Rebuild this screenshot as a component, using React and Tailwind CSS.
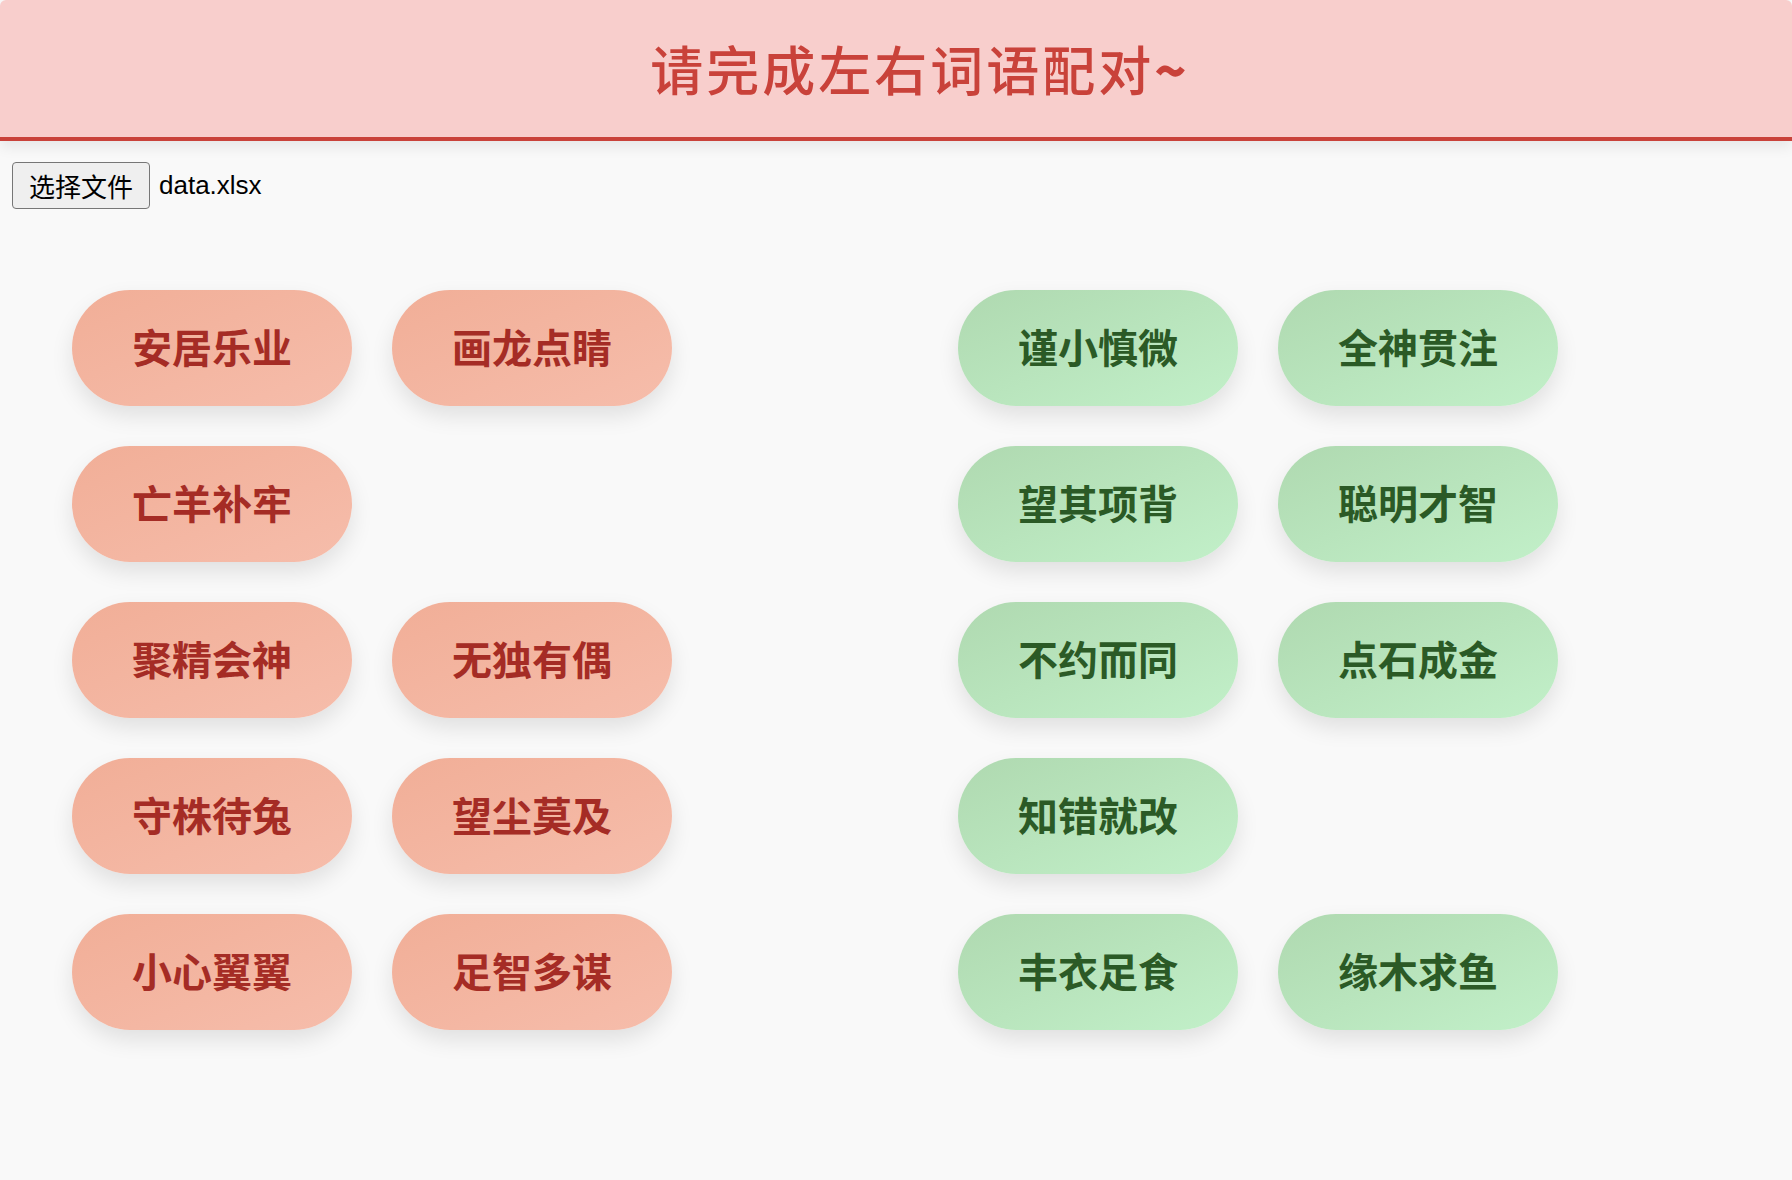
const LEFT = [
  ["安居乐业", "画龙点睛"],
  ["亡羊补牢", null],
  ["聚精会神", "无独有偶"],
  ["守株待兔", "望尘莫及"],
  ["小心翼翼", "足智多谋"],
];

const RIGHT = [
  ["谨小慎微", "全神贯注"],
  ["望其项背", "聪明才智"],
  ["不约而同", "点石成金"],
  ["知错就改", null],
  ["丰衣足食", "缘木求鱼"],
];

const FONT = { fontFamily: '"Noto Sans CJK SC", "Noto Sans", sans-serif' };

function Pill({ word, side }) {
  if (!word) return <div className="h-[116px] w-[280px]" />;
  const tone =
    side === "left"
      ? "bg-gradient-to-br from-[#f1ae97] to-[#f6bdab] text-[#a52c25]"
      : "bg-gradient-to-br from-[#afd9b0] to-[#c2f0c9] text-[#2b5a26]";
  return (
    <button
      type="button"
      className={`flex h-[116px] w-[280px] items-center justify-center rounded-full pb-[5px] text-[40px] font-bold shadow-[0_10px_22px_rgba(0,0,0,0.1)] ${tone}`}
    >
      {word}
    </button>
  );
}

function Column({ rows, side }) {
  return (
    <div className="grid grid-cols-[280px_280px] gap-x-[40px] gap-y-[40px]">
      {rows.flat().map((w, i) => (
        <Pill key={i} word={w} side={side} />
      ))}
    </div>
  );
}

export default function App() {
  return (
    <div className="min-h-[1180px] bg-[#f9f9f9]" style={FONT}>
      <header className="flex h-[141px] items-center justify-center rounded-t-md border-b-4 border-[#c9423a] bg-[#f8cecc] pl-[48px] shadow-[0_6px_14px_rgba(0,0,0,0.08)]">
        <h1 className="text-[53px] font-medium tracking-[3px] text-[#c9423a]">
          请完成左右词语配对<span className="font-black">~</span>
        </h1>
      </header>

      <div className="flex items-center gap-[9px] pl-[12px] pt-[21px]">
        <button
          type="button"
          className="h-[47px] w-[138px] rounded-[4px] border-[1.5px] border-[#767676] bg-[#efefef] text-[26px] text-black"
        >
          选择文件
        </button>
        <span className="text-[26px] text-black" style={{ fontFamily: '"Liberation Sans", "Noto Sans CJK SC", sans-serif' }}>
          data.xlsx
        </span>
      </div>

      <main className="flex gap-[286px] pl-[72px] pt-[81px]">
        <Column rows={LEFT} side="left" />
        <Column rows={RIGHT} side="right" />
      </main>
    </div>
  );
}
